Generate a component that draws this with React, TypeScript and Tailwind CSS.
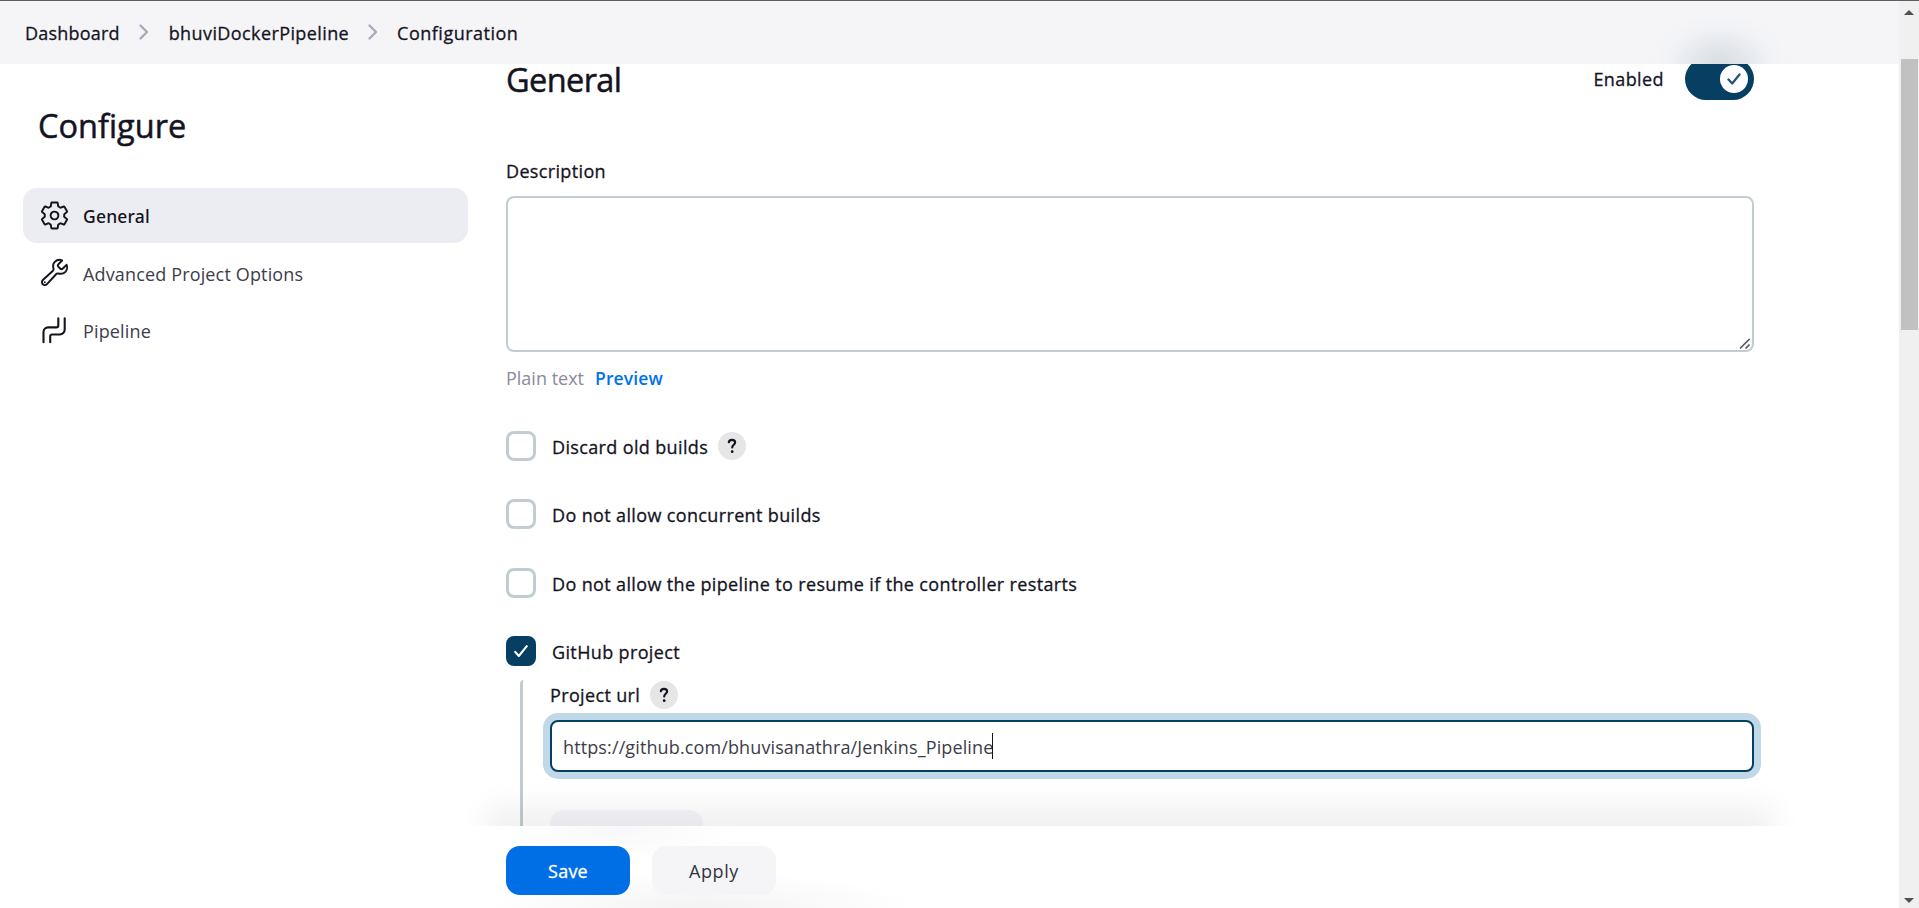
import type { ReactNode } from 'react';
import { IoBuildOutline, IoSettingsOutline } from 'react-icons/io5';

function Chevron() {
  return (
    <svg className="h-4 w-[10px] shrink-0" viewBox="0 0 10 16" fill="none" stroke="#a9a7bb" strokeWidth="2.3" strokeLinecap="round" strokeLinejoin="round">
      <path d="M1.5 1.5 8 8l-6.5 6.5" />
    </svg>
  );
}

function PipelineIcon() {
  return (
    <svg className="h-[31px] w-[31px]" viewBox="0 0 31 31" fill="none" stroke="currentColor" strokeWidth="2.1" strokeLinecap="round">
      <path d="M4.500 27.200V17a4.600 4.600 0 0 1 4.600-4.600h8.200a2 2 0 0 0 2-2V3.300" />
      <path d="M11.200 27.200v-5.700a2 2 0 0 1 2-2h7.600a4.900 4.900 0 0 0 4.900-4.900V3.300" />
    </svg>
  );
}

function NavItem({ icon, children, active }: { icon: ReactNode; children: ReactNode; active?: boolean }) {
  return (
    <a
      className={
        active
          ? 'flex h-[55px] items-center gap-[13px] rounded-[14px] bg-[#ecedf3] pl-4 font-["Noto_Sans",sans-serif] text-[17.5px] font-medium tracking-[0.2px]'
          : 'flex h-[55px] items-center gap-[13px] rounded-[14px] pl-4 tracking-[0.15px] text-[#3d3d49]'
      }
    >
      <span className="-mt-px text-[31px] text-[#14141f]">{icon}</span>
      <span className="pt-px leading-6">{children}</span>
    </a>
  );
}

function Help() {
  return (
    <span className="flex size-7 items-center justify-center rounded-full bg-[#e6e6e6]">
      <svg className="h-4 w-3" viewBox="0 0 12 16" fill="none" stroke="#14141f" strokeWidth="2.2" strokeLinecap="round" strokeLinejoin="round">
        <path d="M2.8 4.2C3.1 2.7 4.3 1.8 6 1.8c1.8 0 3.1 1 3.1 2.6C9.1 6.7 6.2 6.9 6.2 9.5" />
        <circle cx="6.2" cy="13.7" r="1.4" fill="#14141f" stroke="none" />
      </svg>
    </span>
  );
}

function Option({ children, checked, help }: { children: ReactNode; checked?: boolean; help?: boolean }) {
  return (
    <div className="flex h-[30px] items-center">
      {checked ? (
        <span className="flex size-[30px] items-center justify-center rounded-lg bg-[#063f61]">
          <svg className="size-[14px]" viewBox="0 0 14 14" fill="none" stroke="#fff" strokeWidth="2.1" strokeLinecap="round" strokeLinejoin="round">
            <path d="m1.2 7.900 3.600 4.100 8-9.800" />
          </svg>
        </span>
      ) : (
        <span className="size-[30px] rounded-lg border-[3px] border-[#c2cdd1]" />
      )}
      <span className="ml-4 pt-0.5 leading-6 tracking-[0.36px] [-webkit-text-stroke:0.3px]">{children}</span>
      {help && (
        <span className="ml-[10px]">
          <Help />
        </span>
      )}
    </div>
  );
}

export default function App() {
  return (
    <div className='flex h-screen w-full overflow-hidden border-t border-[#5f5b66] bg-white font-["Open_Sans",sans-serif] text-[18px] leading-6 text-[#14141f]'>
      <div className="flex min-w-0 flex-1 flex-col">
        <header className="relative flex h-[63px] shrink-0 items-center overflow-hidden bg-[#f5f5f8] pb-px pl-[25px] [-webkit-text-stroke:0.3px]">
          <span className="absolute top-[12px] left-[1650px] h-[102px] w-[140px] bg-[radial-gradient(closest-side,#dae0e5_10%,#e7eaee_45%,#f1f2f5_72%,#f5f5f8_100%)]" />
          <span className="pt-0.5 tracking-[0.2px]">Dashboard</span>
          <span className="ml-[19px]"><Chevron /></span>
          <span className="ml-[20px] pt-0.5 tracking-[0.4px]">bhuviDockerPipeline</span>
          <span className="ml-[19px]"><Chevron /></span>
          <span className="ml-[19px] pt-0.5 tracking-[0.5px]">Configuration</span>
        </header>

        <div className="flex min-h-0 flex-1">
          <aside className="w-[506px] shrink-0 pl-[23px]">
            <h1 className="mt-[44px] ml-[15px] text-[32.5px] leading-[36px] [-webkit-text-stroke:0.5px]">Configure</h1>
            <nav className="mt-[44px] flex w-[445px] flex-col gap-[2.5px]">
              <NavItem active icon={<IoSettingsOutline />}>General</NavItem>
              <NavItem icon={<IoBuildOutline />}>Advanced Project Options</NavItem>
              <NavItem icon={<PipelineIcon />}>Pipeline</NavItem>
            </nav>
          </aside>

          <main className="flex w-[1248px] flex-col">
            <div className="relative -mr-[60px] -ml-[60px] h-[762px] overflow-hidden px-[60px]">
              <div className="-mt-4 flex h-[62px] items-center justify-between">
                <h2 className="mt-0.5 text-[32.5px] leading-[28px] tracking-[-0.6px] [-webkit-text-stroke:0.5px]">General</h2>
                <div className="flex items-center gap-[21px]">
                  <span className="tracking-[0.4px] [-webkit-text-stroke:0.3px]">Enabled</span>
                  <span className="flex h-[42px] w-[69px] items-center justify-end rounded-full bg-[#063f61] pr-[6px]">
                    <span className="flex size-7 items-center justify-center rounded-full bg-white">
                      <svg className="size-[14px]" viewBox="0 0 14 14" fill="none" stroke="#245573" strokeWidth="2.3" strokeLinecap="round" strokeLinejoin="round">
                        <path d="m1.5 7.500 3.700 4 7.300-9" />
                      </svg>
                    </span>
                  </span>
                </div>
              </div>

              <label className="mt-[49px] block tracking-[0.35px] [-webkit-text-stroke:0.3px]">Description</label>
              <div className="mt-[13px] flex h-[156px] items-end justify-end rounded-lg border-2 border-[#c2cdd1] pr-px">
                <svg className="size-3" viewBox="0 0 12 12" stroke="#55555c" strokeWidth="1.7">
                  <path d="M1 10.500 10.500 1M6.500 10.500l4-4" />
                </svg>
              </div>
              <div className="mt-[14px] flex gap-[11px]">
                <span className="text-[#8b899f]">Plain text</span>
                <span className="text-[17.5px] font-semibold tracking-[0.15px] text-[#0073ea]">Preview</span>
              </div>

              <div className="mt-[41px] flex flex-col gap-[38.4px]">
                <Option help>Discard old builds</Option>
                <Option>Do not allow concurrent builds</Option>
                <Option>Do not allow the pipeline to resume if the controller restarts</Option>
                <Option checked>GitHub project</Option>
              </div>

              <div className="mt-[13.8px] ml-[14px] h-[200px] rounded-t-sm border-l-[3px] border-[#c2cdd1] pl-[27px]">
                <div className="flex h-[30px] items-center gap-[10px]">
                  <span className="tracking-[0.35px] [-webkit-text-stroke:0.3px]">Project url</span>
                  <Help />
                </div>
                <div className="mt-[10px] flex h-[52px] items-center rounded-lg border-2 border-[#063f61] bg-white pl-[11px] text-[#3d3d49] shadow-[0_0_0_7px_#c1d9e6]">
                  <span className="pt-0.5 tracking-[0.12px]">https://github.com/bhuvisanathra/Jenkins_Pipeline</span>
                  <span className="-ml-px h-[26px] w-px bg-[#14141f]" />
                </div>
                <div className="mt-[38px] h-[50px] w-[153px] rounded-[14px] bg-[#f5f5fa]" />
              </div>
              <div className="absolute top-[762px] right-[60px] left-[60px] h-20 shadow-[0_0_28px_20px_rgba(0,0,0,0.06)]" />
            </div>

            <div className="relative -ml-[20px] flex flex-1 gap-[22px] overflow-hidden pt-5 pl-[20px]">
              <span className="absolute -bottom-[36px] left-0 h-[72px] w-[430px] bg-[radial-gradient(closest-side,#f3f3f4,#ffffff)]" />
              <span className="absolute -top-[36px] left-[20px] h-[72px] w-[230px] bg-[radial-gradient(closest-side,#f8f8fa,#ffffff)]" />
              <button className="relative h-[49px] w-[124px] rounded-[14px] bg-[#006fe6] pt-px tracking-[0.2px] text-white [-webkit-text-stroke:0.3px]">Save</button>
              <button className="relative h-[49px] w-[124px] rounded-[14px] bg-[#f5f5f8] pt-px tracking-[0.6px] text-[#33333f]">Apply</button>
            </div>
          </main>
        </div>
      </div>

      <div className="flex w-5 shrink-0 flex-col items-center bg-[#f0f0f0]">
        <svg className="mt-[9px] h-[5px] w-[10px]" viewBox="0 0 10 5" fill="#505050"><path d="M5 0 0 5h10z" /></svg>
        <div className="mt-[44px] ml-px h-[271px] w-[17px] bg-[#c1c1c1]" />
        <svg className="mt-auto mb-[5px] h-[5px] w-[10px]" viewBox="0 0 10 5" fill="#505050"><path d="M5 5 0 0h10z" /></svg>
      </div>
    </div>
  );
}
